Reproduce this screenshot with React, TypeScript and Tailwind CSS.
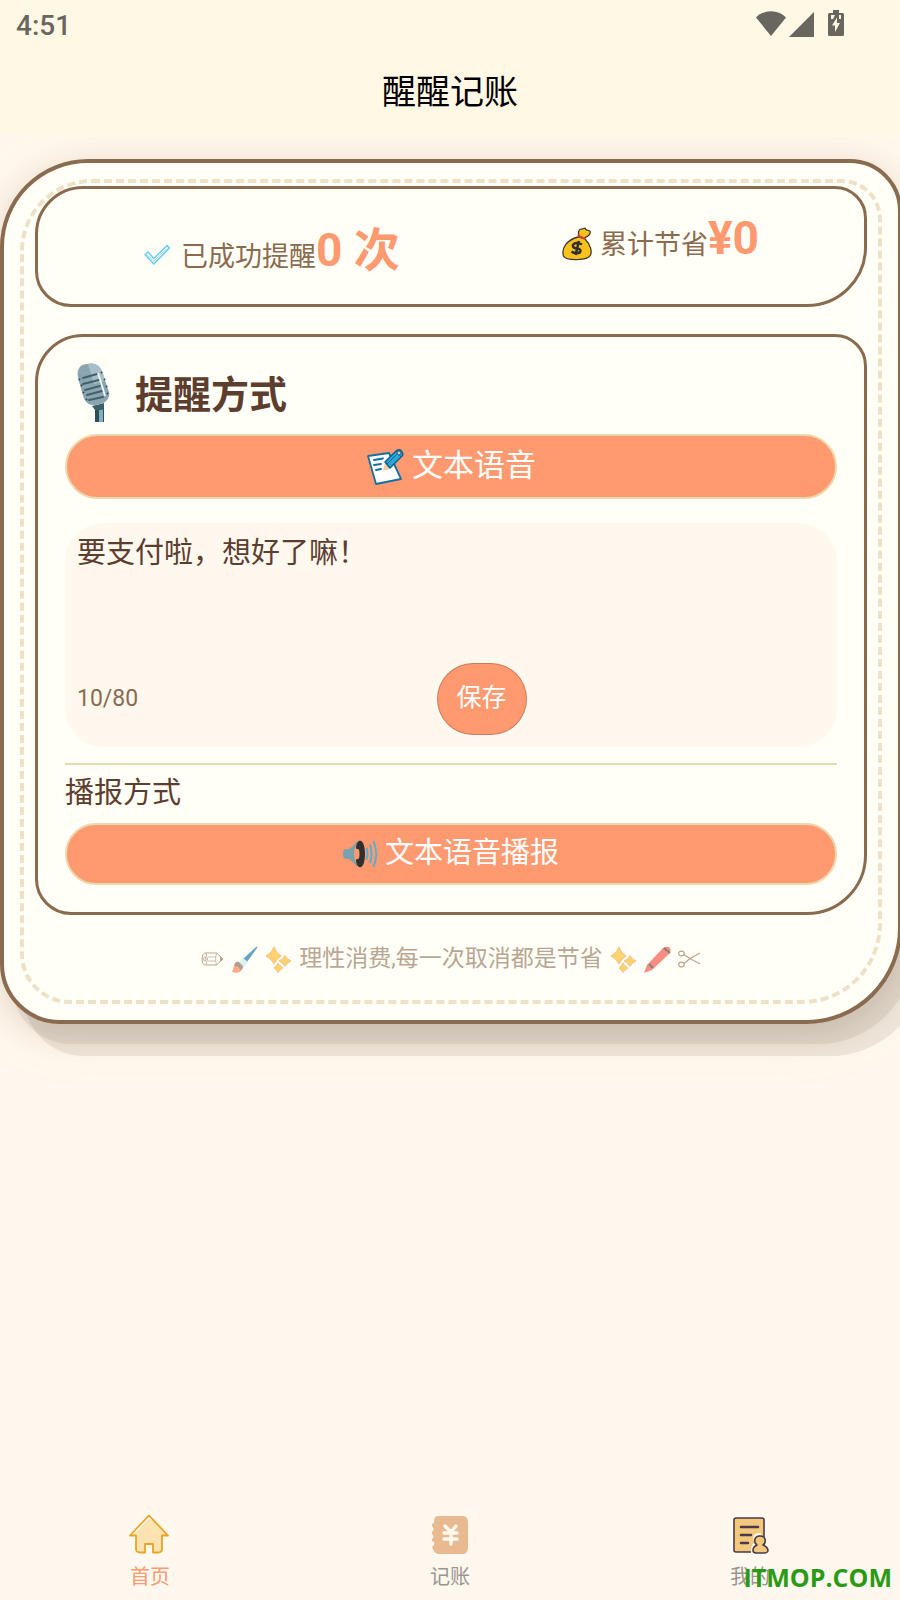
import { useState } from "react";

function StatusBar() {
  return (
    <div className="flex h-12 items-center justify-between pl-4 pr-14 text-[#69665f]">
      <span className="pt-1 font-[Roboto] text-[28px] font-medium leading-8">4:51</span>
      <div className="flex items-center">
        <svg width="30" height="26" viewBox="0 0 30 26" fill="currentColor" aria-hidden="true">
          <path d="M0 6.500C8-2 22-2 30 6.500L15 25Z" />
        </svg>
        <svg className="ml-[3px]" width="25" height="26" viewBox="0 0 25 26" fill="currentColor" aria-hidden="true">
          <path d="M25 1V26H0Z" />
        </svg>
        <svg className="ml-[14px]" width="16" height="30" viewBox="0 0 16 30" fill="currentColor" aria-hidden="true">
          <path
            fillRule="evenodd"
            d="M5 1h6v3h3.500Q16 4 16 5.500V25.500Q16 27 14.500 27H1.500Q0 27 0 25.500V5.500Q0 4 1.500 4H5ZM9 8.500L4 16.500H7V23L12 14H9Z"
          />
          <path d="M3 6h4l-2 4H3zM11 6h2v4h-2z" fill="#fef7e5" />
        </svg>
      </div>
    </div>
  );
}

function CheckIcon() {
  return (
    <svg width="28" height="22" viewBox="0 0 28 22" fill="none" stroke="#6ccdee" strokeWidth="1.500" strokeLinejoin="round" aria-hidden="true">
      <path d="M2 10.500L5 8L10.800 14.500L24 1.500L26.500 4L10.800 20Z" />
      <path d="M4 10.500L10.800 17.300L24.500 4" strokeWidth="0.800" />
    </svg>
  );
}

function MoneyBagIcon() {
  return (
    <svg width="30" height="34" viewBox="0 0 30 34" aria-hidden="true">
      <path d="M18 10C15 6 17 2 19 2C20 3 21 1 23 1C23 3 25 3 28 4C29 7 27 9 22 11Z" fill="#fcc21b" stroke="#2f2f2f" strokeWidth="1.200" strokeLinejoin="round" />
      <path d="M16 10L23 12C29 18 30 25 28.500 28C26 34 4 34 1.500 29C-1 21 5 13 16 10Z" fill="#fcc21b" stroke="#3b3a35" strokeWidth="1.300" />
      <path d="M15.500 8.500L23.500 12" stroke="#db4437" strokeWidth="2" />
      <path d="M20 17.500C15 14.500 10 16.500 11 19.500C12 22.500 19 20.500 18.500 24C18 27 12 26.500 9.500 24.500M17 14L13.500 28" fill="none" stroke="#2f2f2f" strokeWidth="2.500" />
    </svg>
  );
}

function MicIcon() {
  return (
    <svg width="34" height="60" viewBox="0 0 34 60" aria-hidden="true">
      <path d="M18 44H27V59H18Z" fill="#2f4f58" />
      <path d="M22 46H26V59H22Z" fill="#82aec0" />
      <path d="M15 43L27 40V44L25 47H18Z" fill="#3c606b" />
      <path d="M1 15C-1 4 5 1 11 1C19 -1 24 4 26 11L32 29C34 38 24 42 18 42C10 43 7 37 5 29Z" fill="#8ba5b0" />
      <path d="M11 1C19-1 24 4 26 11L28 18L17 21Z" fill="#a9bfc8" />
      <path d="M6 15L20 11M6 21L22 17M8 27L23 23M10 32L25 28M12 37L26 34" stroke="#3f616c" strokeWidth="2" strokeLinecap="round" />
      <path d="M2 16l1 1M4 22l1 1M6 29l1 1M9 36l1 1M24 9l1 1M27 16l1 1M29 23l1 1M30 30l1 1" stroke="#2f4f58" strokeWidth="2" />
      <path d="M21 10L26 26L28 33" fill="none" stroke="#f2f7f8" strokeWidth="1.800" />
    </svg>
  );
}

function MemoIcon() {
  return (
    <svg width="38" height="38" viewBox="0 0 38 38" aria-hidden="true">
      <path d="M2 8L23 5L35 31L10 36Z" fill="#fff" stroke="#1370a3" strokeWidth="1.800" strokeLinejoin="round" />
      <path d="M8 12L17 10.500M8 17L15 16M10 22L15 21" stroke="#1370a3" strokeWidth="1.800" strokeLinecap="round" />
      <path d="M17 22L19 15L25 19L22 22Z" fill="#f6c9a9" />
      <path d="M19 14L30 3Q34 0 36 4Q38 7 35 9L24 20Z" fill="#2aa9dc" stroke="#0e608d" strokeWidth="1.500" strokeLinejoin="round" />
      <path d="M21 16L32 5M30 3L35 9" stroke="#0e608d" strokeWidth="1" />
      <circle cx="33" cy="5" r="2" fill="#f6c9a9" stroke="#0e608d" />
    </svg>
  );
}

function SpeakerIcon() {
  return (
    <svg width="35" height="28" viewBox="0 0 35 28" aria-hidden="true">
      <path d="M2 9H5Q8 9 14 1V27Q8 19 5 19H2Q0 18 0 14T2 9Z" fill="#78a3ad" />
      <path d="M14 3Q8 14 14 25L17 24V4Z" fill="#ff996f" />
      <path d="M16 1C20-1 22 7 22 14C22 21 20 29 16 27C14 26 13 23 13 19.500L16 18.500Q17 14 16 9.500L13 8.500C13 5 14 2 16 1Z" fill="#303030" />
      <path d="M23.500 8Q25.500 14 23.500 20M27 5Q30 14 27 23M30.500 1Q36 14 30.500 27" fill="none" stroke="#45b3df" strokeWidth="1.800" />
    </svg>
  );
}

function PencilIcon() {
  return (
    <svg width="23" height="14" viewBox="0 0 23 14" fill="none" stroke="#8b6b4f" strokeWidth="1" strokeLinejoin="round" aria-hidden="true">
      <path d="M3.500 1H15.500L22 7L15.500 13H3.500Q1 12 1 7T3.500 1Z" />
      <path d="M7 5H15M7 9H15M15.500 1Q13.500 7 15.500 13" strokeWidth="0.700" />
      <ellipse cx="3.800" cy="7" rx="1.200" ry="2" />
      <path d="M5 1Q8 7 5 13" strokeWidth="0.800" />
      <path d="M19.500 5L22 7L19.500 9Z" fill="#8b6b4f" />
    </svg>
  );
}

function BrushIcon() {
  return (
    <svg width="27" height="27" viewBox="0 0 27 27" aria-hidden="true">
      <path d="M12 13L25 1Q27 0 26 2L16 16Z" fill="#03679f" />
      <path d="M7 17L12 12L17 16L12 22Z" fill="#c5e8ee" />
      <path d="M3 20Q4 15 8 16L12 20Q12 24 9 25Z" fill="#865c52" />
      <path d="M1 26Q2 24 3 20Q6 20 8 22T10 25Q6 28 1 26Z" fill="#ff7043" />
    </svg>
  );
}

function SparklesIcon() {
  return (
    <svg width="27" height="27" viewBox="0 0 27 27" fill="#fdb515" stroke="#f79329" strokeWidth="1" strokeLinejoin="round" aria-hidden="true">
      <path d="M9 1Q11 7 16 10Q11 13 9 18Q7 13 1 10Q7 7 9 1Z" />
      <path d="M20 9.500Q21.500 13.500 26 15Q21.500 16.500 20 20.500Q18.500 16.500 14 15Q18.500 13.500 20 9.500Z" />
      <path d="M13 17Q14.500 20.500 18 22Q14.500 23.500 13 26.500Q11.500 23.500 9 22Q11.500 20.500 13 17Z" />
    </svg>
  );
}

function CrayonIcon() {
  return (
    <svg width="27" height="27" viewBox="0 0 27 27" aria-hidden="true">
      <path d="M0 27L3 19L19 2Q22 0 25 1Q28 4 25 8L8 24Z" fill="#f44336" />
      <path d="M20 2L26 7M5 18L9 22" stroke="#2f2f2f" strokeWidth="2" />
    </svg>
  );
}

function ScissorsIcon() {
  return (
    <svg width="23" height="18" viewBox="0 0 23 18" fill="none" stroke="#8b6b4f" strokeWidth="1.200" aria-hidden="true">
      <ellipse cx="3.500" cy="3.500" rx="2.800" ry="2.400" />
      <ellipse cx="3.500" cy="14.500" rx="2.800" ry="2.400" />
      <path d="M6 4.500L12 8.500L22 14M6 13.500L12 8.500L22 3" />
    </svg>
  );
}

function HomeIcon() {
  return (
    <svg width="42" height="42" viewBox="0 0 42 42" aria-hidden="true">
      <path d="M20 2.500L39 22.500H33V36Q33 39.500 29 39.500H24V31H16V39.500H12Q7 39.500 7 36V22.500H1Z" fill="#fde3b2" stroke="#e9a51f" strokeWidth="1.800" strokeLinejoin="round" />
      <path d="M5 20.500L20 5L22 7" fill="none" stroke="#fff8ea" strokeWidth="1.500" />
    </svg>
  );
}

function LedgerIcon() {
  return (
    <svg width="42" height="42" viewBox="0 0 42 42" aria-hidden="true">
      <path d="M9 3H34Q39 3 39 10V34Q39 41 34 41H9Q5 40 3 34Q6 32 5 29L3 28V26Q6 24 3 21V19Q6 16 3 13V11Q6 10 5 7Q6 3 9 3Z" fill="#e9b98f" />
      <path d="M16 13L22 19L27 13M22 19V31M15 20H28M15 26H28" fill="none" stroke="#fff8ee" strokeWidth="3.500" strokeLinecap="round" strokeLinejoin="round" />
    </svg>
  );
}

function ProfileIcon() {
  return (
    <svg width="42" height="42" viewBox="0 0 42 42" fill="#f3c77c" stroke="#4b3a4a" strokeWidth="1.600" strokeLinejoin="round" strokeLinecap="round" aria-hidden="true">
      <path d="M7 5H33Q35 5 35 7V37Q35 39 33 39H7Q5 39 5 37V7Q5 5 7 5Z" />
      <path d="M12 14H29M12 22H22M12 30H19" strokeWidth="2.500" />
      <path d="M23 40Q22 32 27 30Q22 21 31 21" fill="none" stroke="#fff8ee" strokeWidth="2" />
      <path d="M28 32Q25 30 26 26Q27 23 31 23T36 26Q37 30 34 32Q39 34 39 38Q38 40 36 40H27Q24 40 24 37Q24 34 28 32Z" />
    </svg>
  );
}

const tabs = [
  { label: "首页", icon: <HomeIcon />, tone: "text-[#ff996f]" },
  { label: "记账", icon: <LedgerIcon />, tone: "text-[#999692]" },
  { label: "我的", icon: <ProfileIcon />, tone: "text-[#999692]" },
];

const innerCard =
  "relative rounded-tl-[48px] rounded-tr-[32px] rounded-br-[60px] rounded-bl-[36px] border-3 border-[#8b6b4f] bg-[#fffff7]";

export default function App() {
  const [message, setMessage] = useState("要支付啦，想好了嘛！");

  return (
    <div className="relative flex min-h-screen flex-col overflow-hidden bg-[#fff8ee] font-[Roboto,'Noto_Sans_CJK_SC',sans-serif] text-[#5d3d2e]">
      <header className="relative z-10 bg-[#fff8e5] pb-[9px]">
        <StatusBar />
        <h1 className="pt-[26px] pb-4 text-center text-[34px] font-normal leading-9 text-black">醒醒记账</h1>
      </header>

      <main className="-mr-[2px] pt-6">
        <section className="relative rounded-tl-[88px] rounded-tr-[52px] rounded-br-[96px] rounded-bl-[60px] border-4 border-[#8b6b4f] bg-[#fffff7] px-[31px] pt-[23px] pb-[45px] shadow-[12px_20px_0_rgba(80,70,40,0.09),24px_32px_0_rgba(80,70,40,0.1),0_8px_32px_rgba(60,40,30,0.14),0_8px_64px_rgba(255,153,111,0.1)]">
          <div className="pointer-events-none absolute inset-4 rounded-tl-[72px] rounded-tr-[40px] rounded-br-[80px] rounded-bl-[50px] border-4 border-dashed border-[#eee1c8]" />

          <div className={`${innerCard} flex h-[121px] items-start justify-around px-6 pt-[26px]`}>
            <p className="flex items-baseline pt-1 text-[27px] leading-[62px] text-[#8b6b4f]">
              <CheckIcon />
              <span className="ml-[10px]">已成功提醒</span>
              <strong className="text-[46px] font-bold text-[#ff996f]">0 次</strong>
            </p>
            <p className="flex items-baseline text-[27px] leading-[46px] text-[#8b6b4f]">
              <span className="self-center pt-1">
                <MoneyBagIcon />
              </span>
              <span className="ml-2">累计节省</span>
              <strong className="text-[46px] font-bold text-[#ff996f]">¥0</strong>
            </p>
          </div>

          <div className={`${innerCard} mt-[27px] px-[27px] pt-6 pb-[27px]`}>
            <h2 className="flex h-16 items-center gap-6 pl-3 text-[38px] font-bold leading-[60px]">
              <MicIcon />
              <span className="pt-1">提醒方式</span>
            </h2>
            <button className="mt-[9px] flex h-[65px] w-full items-center justify-center gap-2 rounded-full border-2 border-[#ead9ac] bg-[#ff996f] text-[31px] text-white">
              <MemoIcon />
              文本语音
            </button>

            <div className="mt-6 rounded-[38px] bg-[#fff8ee] px-3 pt-[10px] pb-3">
              <textarea
                aria-label="提醒内容"
                maxLength={80}
                value={message}
                onChange={(e) => setMessage(e.target.value)}
                className="block h-[130px] w-full resize-none bg-transparent text-[29px] leading-10 outline-none"
              />
              <div className="flex items-center">
                <span className="text-[23px] text-[#8b6b4f]">{message.length}/80</span>
                <div className="flex flex-1 justify-center">
                  <button className="h-[72px] w-[90px] rounded-[36px] border border-black/20 bg-[#ff996f] pb-[2px] text-[25px] text-white">
                    保存
                  </button>
                </div>
              </div>
            </div>

            <hr className="mt-4 border-t-2 border-[#ead9ac]" />
            <h3 className="pt-2 text-[29px] leading-10">播报方式</h3>
            <button className="mt-[10px] flex h-[62px] w-full items-center justify-center gap-[7px] rounded-full border-2 border-[#ead9ac] bg-[#ff996f] text-[29px] text-white">
              <SpeakerIcon />
              文本语音播报
            </button>
          </div>

          <p className="relative mt-7 flex items-center justify-center gap-[7px] text-[23px] leading-8 text-[#8b6b4f] opacity-60">
            <PencilIcon />
            <BrushIcon />
            <SparklesIcon />
            <span>理性消费,每一次取消都是节省</span>
            <SparklesIcon />
            <CrayonIcon />
            <ScissorsIcon />
          </p>
        </section>
      </main>

      <nav className="mt-auto grid h-[100px] grid-cols-3 bg-[#fff8ee] pt-[13px]">
        {tabs.map((tab) => (
          <a key={tab.label} href="#" className={`flex flex-col items-center gap-2 text-xl leading-7 ${tab.tone}`}>
            {tab.icon}
            {tab.label}
          </a>
        ))}
      </nav>
      <span className="absolute right-2 bottom-[7px] font-['Open_Sans'] text-[25px] font-bold leading-8 text-[#2a9a14]">
        ITMOP.COM
      </span>
    </div>
  );
}
